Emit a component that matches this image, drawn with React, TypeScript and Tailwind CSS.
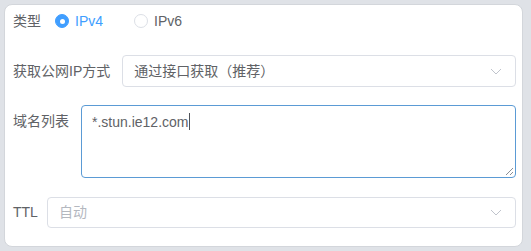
import { useState } from 'react';

const font = { fontFamily: '"Liberation Sans", "Noto Sans CJK SC", sans-serif' };

function Chevron() {
  return (
    <svg width="12" height="7" viewBox="0 0 12 7" className="shrink-0">
      <path d="M1 1l5 5 5-5" fill="none" stroke="#c0c4cc" strokeWidth="1" />
    </svg>
  );
}

function Radio({ checked, label, onClick }: { checked: boolean; label: string; onClick: () => void }) {
  return (
    <button type="button" onClick={onClick} className="flex items-center mr-[31px]">
      <span
        className={
          checked
            ? 'w-[14px] h-[14px] rounded-full bg-[#409eff] border border-[#409eff] flex items-center justify-center'
            : 'w-[14px] h-[14px] rounded-full bg-white border border-[#dcdfe6]'
        }
      >
        {checked && <span className="w-[5px] h-[5px] rounded-full bg-white" />}
      </span>
      <span className={checked ? 'ml-[6px] text-[#409eff]' : 'ml-[6px] text-[#606266]'}>{label}</span>
    </button>
  );
}

export default function App() {
  const [ipType, setIpType] = useState<'v4' | 'v6'>('v4');

  return (
    <div className="w-[531px] h-[251px] bg-[#dfe2e7] pl-[4px] pt-[4px] pr-[8px]" style={font}>
      <div className="h-[243px] bg-white border border-[#d3d6db] rounded-[8px] pl-[8px] pr-[6px] text-[14px] text-[#606266]">
        {/* Type */}
        <div className="flex items-center h-8">
          <span className="mr-[14px]">类型</span>
          <Radio checked={ipType === 'v4'} label="IPv4" onClick={() => setIpType('v4')} />
          <Radio checked={ipType === 'v6'} label="IPv6" onClick={() => setIpType('v6')} />
        </div>

        {/* Public IP method */}
        <div className="flex items-center mt-[18px]">
          <span className="mr-[12px] whitespace-nowrap">获取公网IP方式</span>
          <div className="flex-1 h-[32px] border border-[#dcdfe6] rounded-[4px] flex items-center justify-between pl-[11px] pr-[13px]">
            <span>通过接口获取（推荐）</span>
            <Chevron />
          </div>
        </div>

        {/* Domain list */}
        <div className="flex items-start mt-[18px]">
          <span className="mr-[12px] pt-[6px] leading-[20px] whitespace-nowrap">域名列表</span>
          <div className="relative flex-1 h-[73px] border border-[#5b9bd5] rounded-[4px] pl-[10px] pt-[6px] leading-[20px]">
            <span>*.stun.ie12.com</span>
            <span className="inline-block w-px h-[17px] bg-[#50545a] align-[-3px]" />
            <svg width="9" height="9" viewBox="0 0 9 9" className="absolute right-[1px] bottom-[1px]">
              <path d="M8 1L1 8M8 5L5 8" stroke="#8a8f96" strokeWidth="1" />
            </svg>
          </div>
        </div>

        {/* TTL */}
        <div className="flex items-center mt-[19px]">
          <span className="mr-[9px]">TTL</span>
          <div className="flex-1 h-[31px] border border-[#dcdfe6] rounded-[4px] flex items-center justify-between pl-[11px] pr-[13px]">
            <span className="text-[#b4b8bf]">自动</span>
            <Chevron />
          </div>
        </div>
      </div>
    </div>
  );
}
